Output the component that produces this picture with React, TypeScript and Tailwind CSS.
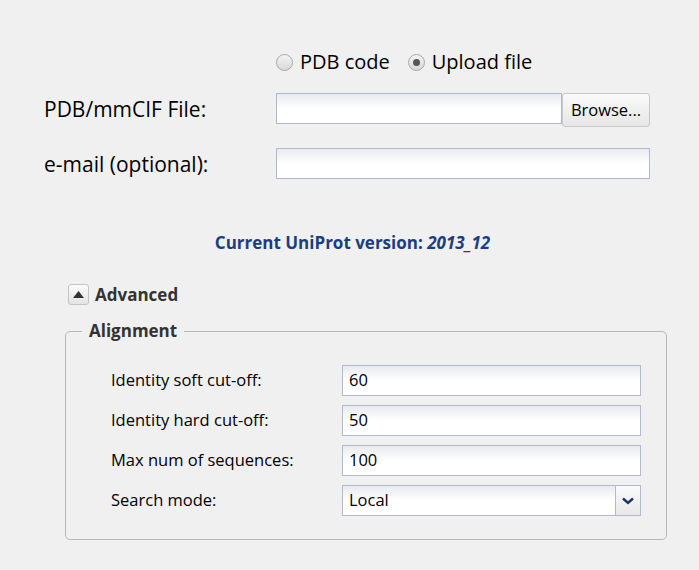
import React from "react";

const inputCls =
  "h-[31px] border border-[#b4b8cc] bg-gradient-to-b from-[#e8eaee] via-white to-white";

function Field({ value }: { value: string }) {
  return (
    <div className={`${inputCls} w-[299px] flex items-center pl-[6px] text-[16.5px] text-black`}>
      {value}
    </div>
  );
}

function Radio({ checked }: { checked: boolean }) {
  return (
    <span className="w-[17px] h-[17px] rounded-full border border-[#a8a8a8] bg-gradient-to-b from-[#f4f4f4] to-[#d8d8d8] flex items-center justify-center">
      {checked && <span className="w-[7px] h-[7px] rounded-full bg-[#555]" />}
    </span>
  );
}

export default function App() {
  return (
    <div
      className="w-[699px] h-[570px] bg-[#f0f0f0] text-black overflow-hidden"
      style={{ fontFamily: '"Open Sans", "Noto Sans", sans-serif' }}
    >
      <div className="pt-[51px] pl-[276px] flex items-center h-[73px] text-[20px]">
        <Radio checked={false} />
        <span className="ml-[7px]">PDB code</span>
        <span className="ml-[18px]"><Radio checked={true} /></span>
        <span className="ml-[7px]">Upload file</span>
      </div>

      <div className="mt-[20px] flex items-start">
        <div className="w-[276px] pl-[44px] h-[34px] flex items-center text-[21px]">PDB/mmCIF File:</div>
        <div className={`${inputCls} w-[286px]`} />
        <div className="w-[88px] h-[34px] border border-[#c8c8c8] rounded-[3px] bg-gradient-to-b from-[#fafafa] to-[#e6e6e6] flex items-center justify-center text-[16.5px]">
          Browse...
        </div>
      </div>

      <div className="mt-[21px] flex items-start">
        <div className="w-[276px] pl-[44px] h-[34px] flex items-center text-[21px]">e-mail (optional):</div>
        <div className={`${inputCls} w-[374px]`} />
      </div>

      <div className="mt-[48px] text-center pl-[6px] text-[17px] font-bold text-[#1c3d80]">
        Current UniProt version: <i>2013_12</i>
      </div>

      <div className="mt-[26px] ml-[68px] flex items-center">
        <div className="w-[21px] h-[21px] border border-[#c4c4c4] rounded-[3px] bg-gradient-to-b from-[#fbfbfb] to-[#e4e4e4] flex items-center justify-center">
          <svg width="11" height="7" viewBox="0 0 11 7">
            <path d="M5.5 0 L11 7 L0 7 Z" fill="#333" />
          </svg>
        </div>
        <span className="ml-[6px] text-[17px] font-bold text-[#333]">Advanced</span>
      </div>

      <div className="relative mt-[24px] ml-[65px] w-[602px] h-[209px] border border-[#b8b8b8] rounded-[5px] pt-[33px] pl-[45px]">
        <div className="absolute -top-[13px] left-[16px] px-[7px] bg-[#f0f0f0] text-[17px] font-bold text-[#333] leading-[24px]">
          Alignment
        </div>
        <div className="flex flex-col gap-[9px] text-[16.5px]">
          <div className="flex items-center">
            <span className="w-[231px]">Identity soft cut-off:</span>
            <Field value="60" />
          </div>
          <div className="flex items-center">
            <span className="w-[231px]">Identity hard cut-off:</span>
            <Field value="50" />
          </div>
          <div className="flex items-center">
            <span className="w-[231px]">Max num of sequences:</span>
            <Field value="100" />
          </div>
          <div className="flex items-center">
            <span className="w-[231px]">Search mode:</span>
            <div className={`${inputCls} w-[299px] flex items-center`}>
              <span className="flex-1 pl-[6px]">Local</span>
              <div className="w-[25px] h-full border-l border-[#b4b8cc] bg-gradient-to-b from-[#fafafa] to-[#e8e8e8] flex items-center justify-center">
                <svg width="12" height="8" viewBox="0 0 12 8">
                  <path d="M1 1.5 L6 6 L11 1.5" fill="none" stroke="#1c3366" strokeWidth="2.4" />
                </svg>
              </div>
            </div>
          </div>
        </div>
      </div>
    </div>
  );
}
